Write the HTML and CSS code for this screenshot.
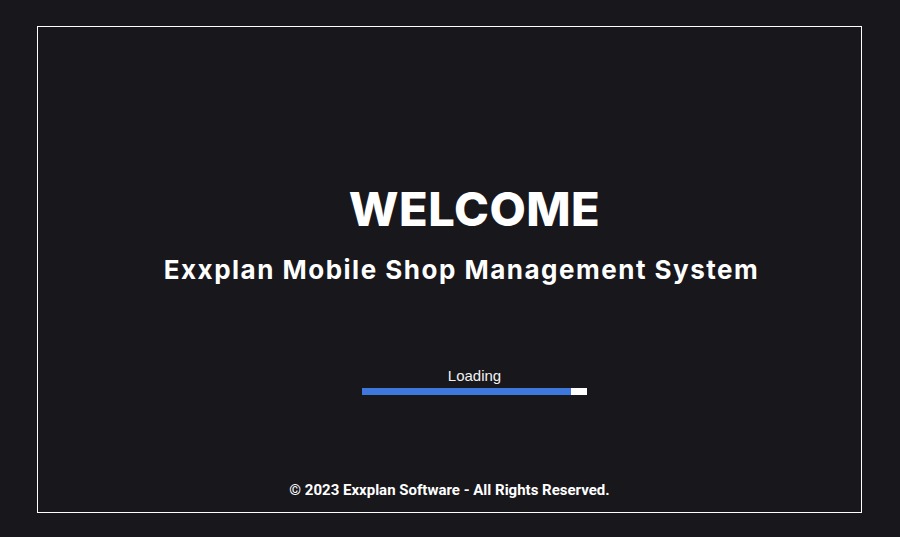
FILE: index.html
```html
<!DOCTYPE html>
<html>
<head>
<meta charset="utf-8">
<link rel="stylesheet" href="styles.css">
</head>
<body>
<div class="frame">
  <div class="hero">
    <h1 class="title">WELCOME</h1>
    <h2 class="subtitle">Exxplan Mobile Shop Management System</h2>
  </div>
  <div class="loader">
    <div class="loader-label">Loading</div>
    <div class="bar"><div class="bar-fill" style="width:93%"></div></div>
  </div>
  <div class="footer">© 2023 Exxplan Software - All Rights Reserved.</div>
</div>
</body>
</html>
```
FILE: styles.css
```css
html, body {
  margin: 0;
  padding: 0;
  background: #18171c;
  width: 900px;
  height: 537px;
  overflow: hidden;
}
body {
  padding: 26px 38px 24px 37px;
  box-sizing: border-box;
}
.frame {
  box-sizing: border-box;
  height: 100%;
  border: 1px solid #ffffff;
  display: flex;
  flex-direction: column;
  align-items: center;
  color: #ffffff;
}
.hero {
  margin-top: 153px;
  display: flex;
  flex-direction: column;
  align-items: center;
}
.title {
  margin: 0;
  font-family: Inter, "Noto Sans", sans-serif;
  font-weight: 800;
  font-size: 47px;
  line-height: 58px;
  letter-spacing: 0.5px;
  padding-left: 50px;
}
.subtitle {
  margin: 15px 0 0 0;
  font-family: Inter, "Noto Sans", sans-serif;
  font-weight: 700;
  font-size: 26px;
  line-height: 34px;
  letter-spacing: 1.5px;
  padding-left: 24px;
}
.loader {
  margin-top: 80px;
  padding-left: 50px;
  display: flex;
  flex-direction: column;
  align-items: center;
}
.loader-label {
  font-family: "Liberation Sans", Arial, sans-serif;
  font-size: 15px;
  line-height: 18px;
  color: #f2f2f2;
}
.bar {
  margin-top: 3px;
  width: 225px;
  height: 7px;
  background: #ffffff;
}
.bar-fill {
  height: 100%;
  background: #3f78dc;
}
.footer {
  margin-top: auto;
  margin-bottom: 13px;
  font-family: Roboto, "Liberation Sans", sans-serif;
  font-weight: 700;
  font-size: 15px;
  line-height: 18px;
  color: #ffffff;
}
```
